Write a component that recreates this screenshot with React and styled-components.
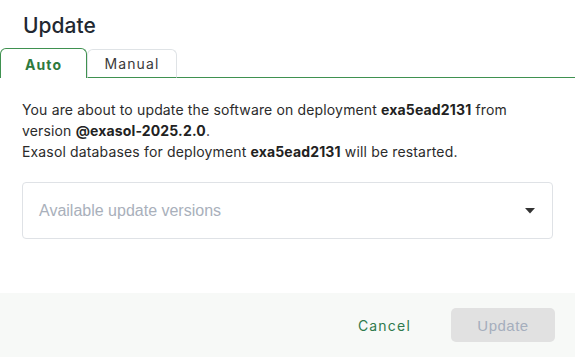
import React from "react";
import styled, { createGlobalStyle } from "styled-components";

const Global = createGlobalStyle`
  html, body { margin: 0; padding: 0; background: #fff; }
  * { box-sizing: border-box; }
`;

const Dialog = styled.div`
  width: 575px;
  height: 357px;
  display: flex;
  flex-direction: column;
  background: #fff;
  font-family: Inter, "Liberation Sans", sans-serif;
  color: #2b2b2b;
`;

const Header = styled.div`
  padding: 12px 23px 0;
  height: 48px;
`;

const Title = styled.h2`
  margin: 0;
  font-size: 21px;
  line-height: 28px;
  font-weight: 500;
  color: #222831;
`;

const TabBar = styled.div`
  display: flex;
  align-items: flex-end;
  height: 30px;
`;

const Tab = styled.div`
  display: flex;
  align-items: center;
  justify-content: center;
  font-size: 14px;
  letter-spacing: 1.1px;
  border-radius: 6px 6px 0 0;
  ${(p) =>
    p.$active
      ? `
    width: 87px;
    height: 30px;
    border: 1px solid #3f9150;
    border-bottom: none;
    color: #2f7a3d;
    font-weight: 700;
    padding-top: 1px;
  `
      : `
    width: 90px;
    height: 29px;
    border: 1px solid #dfe3e6;
    border-bottom: 1px solid #3f9150;
    color: #3a3a3a;
    font-weight: 400;
  `}
`;

const TabFiller = styled.div`
  flex: 1;
  height: 1px;
  background: #3f9150;
`;

const Content = styled.div`
  padding: 21px 22px 0;
  flex: 1;
`;

const Text = styled.p`
  margin: 0;
  font-size: 14px;
  line-height: 21px;
  letter-spacing: 0.15px;
  color: #2b2b2b;
  b { font-weight: 700; color: #222; }
`;

const Select = styled.div`
  margin-top: 20px;
  height: 57px;
  border: 1px solid #dfe2e6;
  border-radius: 4px;
  display: flex;
  align-items: center;
  justify-content: space-between;
  padding: 0 17px 0 16px;
`;

const Placeholder = styled.span`
  font-family: "Liberation Sans", Arial, sans-serif;
  font-size: 16px;
  color: #a9b0bb;
  padding-top: 1px;
`;

const Footer = styled.div`
  height: 64px;
  background: #f7f9f7;
  display: flex;
  align-items: center;
  justify-content: flex-end;
  padding: 0 20px 0 0;
  gap: 24px;
`;

const TextButton = styled.button`
  background: none;
  border: none;
  font-family: Inter, "Liberation Sans", sans-serif;
  font-size: 14px;
  letter-spacing: 1.2px;
  color: #2f7a4c;
  padding: 8px 16px;
  font-weight: 400;
`;

const PrimaryButton = styled.button`
  width: 104px;
  height: 34px;
  border: none;
  border-radius: 5px;
  background: #e1e1e1;
  color: #a5aebd;
  font-family: "Liberation Sans", Arial, sans-serif;
  font-size: 15px;
  letter-spacing: 0.5px;
`;

export default function App() {
  return (
    <>
      <Global />
      <Dialog>
        <Header>
          <Title>Update</Title>
        </Header>
        <TabBar>
          <Tab $active>Auto</Tab>
          <Tab>Manual</Tab>
          <TabFiller />
        </TabBar>
        <Content>
          <Text>
            You are about to update the software on deployment <b>exa5ead2131</b> from
            <br />
            version <b>@exasol-2025.2.0</b>.
            <br />
            Exasol databases for deployment <b>exa5ead2131</b> will be restarted.
          </Text>
          <Select>
            <Placeholder>Available update versions</Placeholder>
            <svg width="10" height="6" viewBox="0 0 10 6">
              <path d="M0 0 L10 0 L5 5.5 Z" fill="#333" />
            </svg>
          </Select>
        </Content>
        <Footer>
          <TextButton>Cancel</TextButton>
          <PrimaryButton disabled>Update</PrimaryButton>
        </Footer>
      </Dialog>
    </>
  );
}
